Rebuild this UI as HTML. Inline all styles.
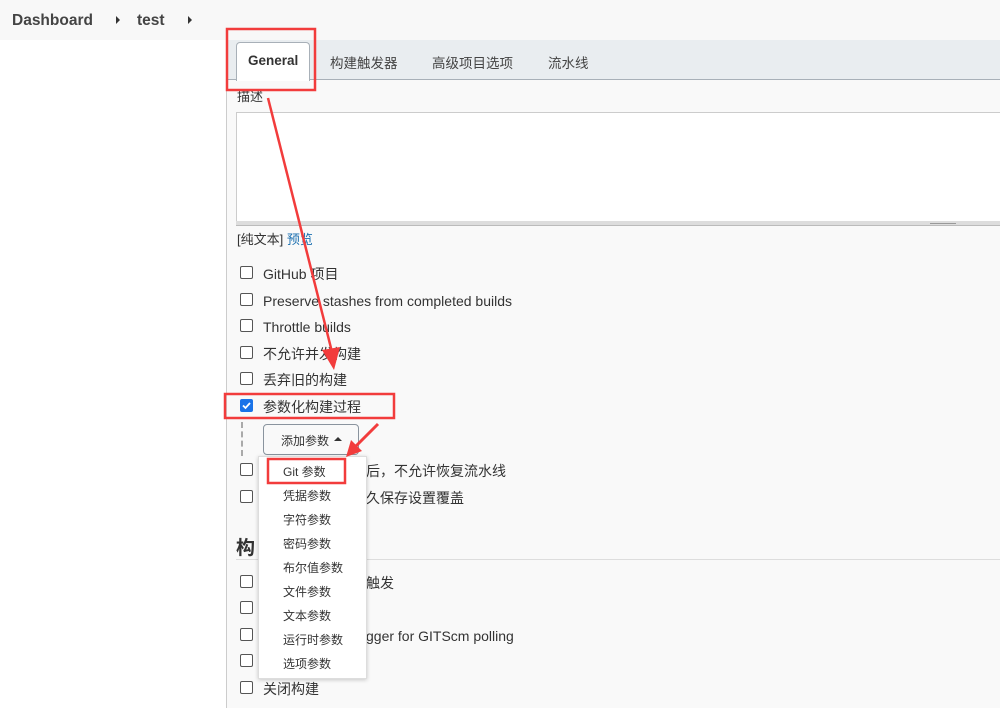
<!DOCTYPE html>
<html><head><meta charset="utf-8"><style>
body{margin:0;width:1000px;height:708px;overflow:hidden;background:#fff;font-family:"Liberation Sans","Noto Sans CJK SC",sans-serif;color:#333;position:relative}
.a{position:absolute}
.top{left:0;top:0;width:1000px;height:40px;background:#f8f8f8}
.cb{position:absolute;left:240px;width:11px;height:11px;border:1px solid #555;border-radius:2px;background:#fff}
.t{position:absolute;left:263px;font-size:14px;line-height:16px;color:#333;white-space:nowrap;margin-top:1px}
.mi{position:absolute;left:283px;font-size:12px;color:#333;white-space:nowrap}
</style></head><body>
<div class="a top"></div>
<div class="a" style="left:12px;top:12px;font-size:15.5px;font-weight:bold;color:#444">Dashboard</div>
<div class="a" style="left:116px;top:16px;width:0;height:0;border-left:4px solid #333;border-top:4px solid transparent;border-bottom:4px solid transparent"></div>
<div class="a" style="left:137px;top:12px;font-size:15.5px;font-weight:bold;color:#444">test</div>
<div class="a" style="left:188px;top:16px;width:0;height:0;border-left:4px solid #333;border-top:4px solid transparent;border-bottom:4px solid transparent"></div>
<div class="a" style="left:226px;top:40px;width:774px;height:668px;background:#f9f9f9;border-left:1px solid #ccc"></div>
<div class="a" style="left:227px;top:40px;width:773px;height:39px;background:#e9edf0;border-bottom:1px solid #a8b0b8"></div>
<div class="a" style="left:236px;top:42px;width:72px;height:38px;background:#fff;border:1px solid #a8b0b8;border-bottom:none;border-radius:4px 4px 0 0"></div>
<div class="a" style="left:248px;top:53px;font-size:13.5px;font-weight:bold;color:#333">General</div>
<div class="a" style="left:330px;top:52px;font-size:13.5px;color:#444">构建触发器</div>
<div class="a" style="left:432px;top:52px;font-size:13.5px;color:#444">高级项目选项</div>
<div class="a" style="left:548px;top:52px;font-size:13.5px;color:#444">流水线</div>
<div class="a" style="left:237px;top:86px;font-size:13px;color:#333">描述</div>
<div class="a" style="left:236px;top:112px;width:764px;height:109px;background:#fff;border:1px solid #ccc"></div>
<div class="a" style="left:236px;top:221px;width:764px;height:4px;background:#ddd;border-bottom:1px solid #bbb"></div>
<div class="a" style="left:930px;top:223px;width:26px;height:1px;background:#999"></div>
<div class="a" style="left:237px;top:229px;font-size:13px;color:#333">[纯文本] <span style="color:#1a6fb0">预览</span></div>
<div class="cb" style="top:266px"></div><div class="t" style="top:265px">GitHub 项目</div>
<div class="cb" style="top:293px"></div><div class="t" style="top:292px">Preserve stashes from completed builds</div>
<div class="cb" style="top:319px"></div><div class="t" style="top:318px">Throttle builds</div>
<div class="cb" style="top:346px"></div><div class="t" style="top:345px">不允许并发构建</div>
<div class="cb" style="top:372px"></div><div class="t" style="top:371px">丢弃旧的构建</div>
<div class="cb" style="top:399px;background:#1a73e8;border-color:#1a73e8"><svg width="11" height="11" style="position:absolute;left:0;top:0"><path d="M2 5.5L4.5 8L9 3" stroke="#fff" stroke-width="1.8" fill="none"/></svg></div><div class="t" style="top:398px">参数化构建过程</div>
<div class="a" style="left:241px;top:422px;height:34px;border-left:2px dashed #aaa"></div>
<div class="a" style="left:263px;top:424px;width:94px;height:29px;border:1px solid #8a949e;border-radius:4px;background:#f9f9f9"></div>
<div class="a" style="left:281px;top:432px;font-size:12px;color:#333">添加参数</div>
<div class="a" style="left:334px;top:437px;width:0;height:0;border-bottom:4px solid #333;border-left:4px solid transparent;border-right:4px solid transparent"></div>
<div class="cb" style="top:463px"></div><div class="t" style="top:462px;left:366px">后，不允许恢复流水线</div>
<div class="cb" style="top:490px"></div><div class="t" style="top:489px;left:366px">久保存设置覆盖</div>
<div class="a" style="left:236px;top:533px;font-size:19px;font-weight:bold;color:#333">构</div>
<div class="a" style="left:236px;top:559px;width:764px;height:1px;background:#ddd"></div>
<div class="cb" style="top:575px"></div><div class="t" style="top:574px;left:366px">触发</div>
<div class="cb" style="top:601px"></div>
<div class="cb" style="top:628px"></div><div class="t" style="top:627px;left:366px">gger for GITScm polling</div>
<div class="cb" style="top:654px"></div>
<div class="cb" style="top:681px"></div><div class="t" style="top:680px">关闭构建</div>
<div class="a" style="left:258px;top:456px;width:107px;height:221px;background:#fff;border:1px solid #ddd;box-shadow:0 1px 4px rgba(0,0,0,.2)"></div>
<div class="mi" style="top:463px">Git 参数</div>
<div class="mi" style="top:487px">凭据参数</div>
<div class="mi" style="top:511px">字符参数</div>
<div class="mi" style="top:535px">密码参数</div>
<div class="mi" style="top:559px">布尔值参数</div>
<div class="mi" style="top:583px">文件参数</div>
<div class="mi" style="top:607px">文本参数</div>
<div class="mi" style="top:631px">运行时参数</div>
<div class="mi" style="top:655px">选项参数</div>
<svg class="a" style="left:0;top:0" width="1000" height="708">
<g fill="none" stroke="#f23c3c" stroke-width="2.5">
<rect x="227" y="29" width="88" height="61"/>
<rect x="225" y="394" width="169" height="24"/>
<rect x="268" y="459" width="77" height="24"/>
</g>
<path d="M268 98 L332 352" stroke="#f23c3c" stroke-width="2.5"/>
<path d="M322 350 L334 370 L340 347 Z" fill="#f23c3c"/>
<path d="M378 424 L355 447" stroke="#f23c3c" stroke-width="3"/>
<path d="M346 457 L351 440 L362 451 Z" fill="#f23c3c"/>
</svg>
</body></html>
